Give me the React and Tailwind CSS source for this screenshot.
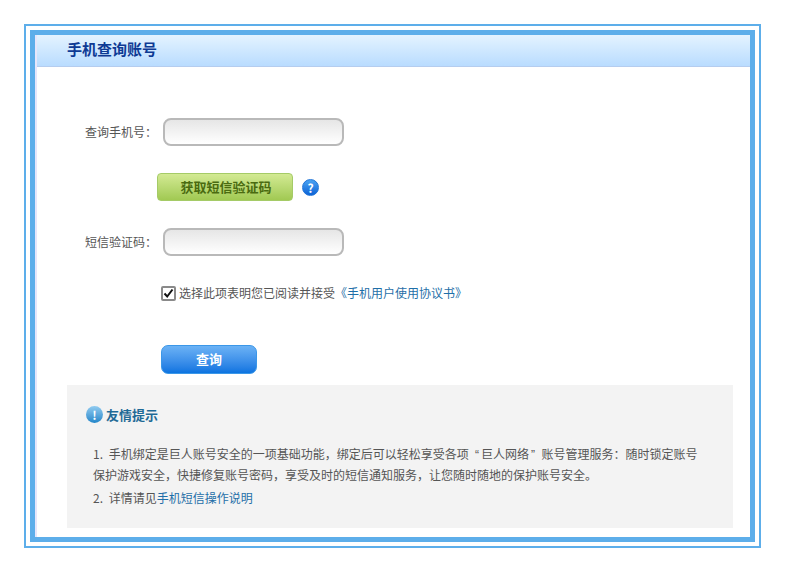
const font = { fontFamily: '"Noto Sans CJK SC", sans-serif' }

function FormRow({ label, mt }) {
  return (
    <div className={`flex items-center ${mt}`}>
      <label className="w-[78px] pl-[48px] box-content text-[12px] leading-[20px] text-[#555] whitespace-nowrap">{label}</label>
      <input className="w-[181px] h-[28px] rounded-[8px] border-2 border-[#b9b9b9] bg-gradient-to-b from-[#e6e6e6] to-white outline-none" />
    </div>
  )
}

export default function App() {
  return (
    <div className="bg-white w-[785px] h-[572px] pt-[24px] pl-[24px]" style={font}>
      <div className="w-[737px] h-[524px] border-2 border-[#5daeea] p-[4px]">
        <div className="h-[512px] border-[5px] border-[#5daeea] bg-white">
          <div className="h-full border-l-2 border-[#e6e6fb]">
            {/* HEADER */}
            <div className="h-[32px] pl-[30px] flex bg-gradient-to-b from-[#e4f3ff] to-[#b9dcff] border-b border-[#b5cdef]">
              <h2 className="text-[15px] font-bold text-[#0e3a94] leading-[28px]">手机查询账号</h2>
            </div>

            <FormRow label="查询手机号：" mt="mt-[51px]" />

            <div className="flex items-center mt-[27px] ml-[120px]">
              <button className="w-[136px] h-[28px] rounded-[4px] border border-[#a5cb67] bg-gradient-to-b from-[#d3ea93] to-[#a1c952] text-[13px] font-bold text-[#4a6b10] pl-[2px]">获取短信验证码</button>
              <span className="ml-[9px] w-[17px] h-[17px] rounded-full border border-[#1f74d8] bg-gradient-to-b from-[#4aa3f2] to-[#0b62d6] text-white text-[12px] font-bold leading-[15px] text-center">?</span>
            </div>

            <FormRow label="短信验证码：" mt="mt-[27px]" />

            <div className="flex items-center mt-[29px] ml-[124px] text-[12px] leading-[16px] text-[#555]">
              <span className="w-[15px] h-[15px] border-2 border-[#8a8a8a] rounded-[2px] bg-white flex items-center justify-center">
                <svg width="11" height="11" viewBox="0 0 11 11">
                  <path d="M1.5 5.5 L4.2 8.5 L9.5 1.5" fill="none" stroke="#111" strokeWidth="2" />
                </svg>
              </span>
              <span className="ml-[3px] whitespace-nowrap">选择此项表明您已阅读并接受</span>
              <a className="text-[#1f6fa8] whitespace-nowrap">《手机用户使用协议书》</a>
            </div>

            <button className="block mt-[44px] ml-[124px] w-[96px] h-[29px] pb-[2px] rounded-[7px] border border-[#3b97e8] bg-gradient-to-b from-[#6bb2f5] to-[#0a74e0] text-white text-[13px] font-bold">查询</button>

            {/* TIPS */}
            <div className="mt-[11px] ml-[30px] w-[666px] h-[143px] bg-[#f3f3f3] pt-[21px] pl-[19px]">
              <div className="flex items-center h-[17px]">
                <span className="w-[17px] h-[17px] rounded-full bg-gradient-to-b from-[#8fcbf0] to-[#1f86c9] text-white text-[12px] font-bold leading-[17px] text-center">!</span>
                <span className="ml-[3px] text-[13px] font-bold text-[#1f6a96]">友情提示</span>
              </div>
              <div className="mt-[20px] pl-[7px] text-[12px] leading-[22px] text-[#555] whitespace-nowrap">
                <p><span className="mr-[3px]">1.</span> 手机绑定是巨人账号安全的一项基础功能，绑定后可以轻松享受各项<span className="font-['Liberation_Sans'] pl-[3px] pr-[2px]"> “</span>巨人网络<span className="font-['Liberation_Sans'] pl-[2px] pr-[3px]">” </span>账号管理服务：随时锁定账号</p>
                <p className="-mt-[2px]">保护游戏安全，快捷修复账号密码，享受及时的短信通知服务，让您随时随地的保护账号安全。</p>
                <p className="mt-px"><span className="mr-[3px]">2.</span> 详情请见<a className="text-[#1f6fa8]">手机短信操作说明</a></p>
              </div>
            </div>
          </div>
        </div>
      </div>
    </div>
  )
}
